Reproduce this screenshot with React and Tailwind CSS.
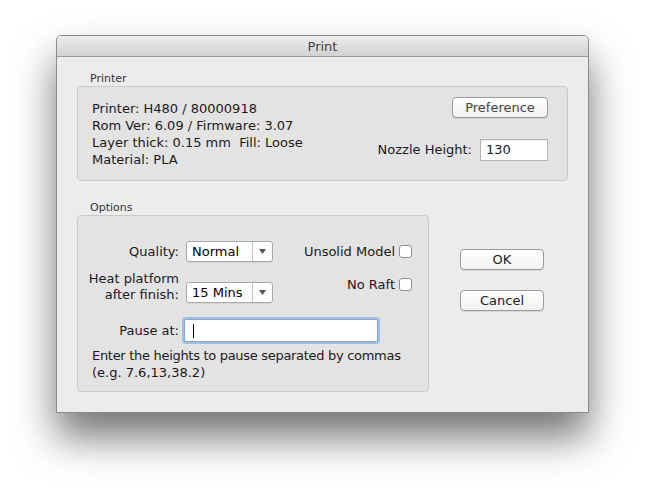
function Select({ value }) {
  return (
    <div className="flex h-[21px] w-[87px] items-stretch rounded-[3px] border border-[#a9a9a9] bg-white shadow-[0_1px_0_rgba(0,0,0,0.06)]">
      <div className="flex flex-1 items-center pl-[5px] text-[13px] text-black">{value}</div>
      <div className="flex w-[20px] items-center justify-center border-l border-[#c4c4c4]">
        <svg width="7" height="5" viewBox="0 0 7 5">
          <path d="M0 0h7L3.5 5z" fill="#555" />
        </svg>
      </div>
    </div>
  );
}

function Check() {
  return <div className="h-[13px] w-[13px] rounded-[3px] border border-[#8e8e8e] bg-white" />;
}

function Button({ children, className = "" }) {
  return (
    <div
      className={`flex h-[21px] items-center justify-center rounded-[4px] border border-[#9a9a9a] bg-gradient-to-b from-white to-[#f1f1f1] text-[13px] shadow-[0_1px_0_rgba(0,0,0,0.08)] ${className}`}
    >
      {children}
    </div>
  );
}

export default function App() {
  return (
    <div
      className="h-[491px] w-[645px] overflow-hidden bg-white pl-[56px] pt-[35px] text-[13px] text-[#1a1a1a]"
      style={{ fontFamily: '"DejaVu Sans", "Noto Sans", sans-serif' }}
    >
      <div className="h-[378px] w-[533px] overflow-hidden rounded-t-[5px] border border-[#8a8a8a] bg-[#ececec] shadow-[0_24px_40px_rgba(0,0,0,0.55)]">
        <div className="flex h-[21px] items-center justify-center border-b border-[#9b9b9b] bg-gradient-to-b from-[#ececec] to-[#d2d2d2] pt-[1px] text-[13px] text-[#404040]">
          Print
        </div>

        <div className="px-[20px]">
          <div className="mt-[15px] pl-[13px] text-[11px] leading-[14px] text-[#333]">Printer</div>
          <div className="flex h-[95px] w-[491px] justify-between rounded-[4px] border border-[#c9c9c9] bg-[#e3e3e3] pl-[14px] pr-[19px]">
            <div className="whitespace-nowrap pt-[13px] text-[13px] leading-[17px]">
              <div>Printer: H480 / 80000918</div>
              <div>Rom Ver: 6.09 / Firmware: 3.07</div>
              <div>Layer thick: 0.15 mm&nbsp;&nbsp;Fill: Loose</div>
              <div>Material: PLA</div>
            </div>
            <div className="flex flex-col items-end pt-[10px]">
              <Button className="w-[96px] text-[#444]">Preference</Button>
              <div className="mt-[21px] flex items-center gap-[8px]">
                <span>Nozzle Height:</span>
                <div className="flex h-[22px] w-[68px] items-center border border-[#b5b5b5] bg-white pl-[5px] shadow-[inset_0_1px_1px_rgba(0,0,0,0.1)]">
                  130
                </div>
              </div>
            </div>
          </div>

          <div className="flex">
            <div>
              <div className="mt-[20px] pl-[13px] text-[11px] leading-[14px] text-[#333]">Options</div>
              <div className="h-[177px] w-[352px] whitespace-nowrap rounded-[4px] border border-[#c9c9c9] bg-[#e3e3e3] pl-[14px] pr-[16px] pt-[25px]">
                <div className="flex h-[21px] items-center">
                  <div className="w-[87px] text-right">Quality:</div>
                  <div className="ml-[7px]">
                    <Select value="Normal" />
                  </div>
                  <div className="ml-auto flex items-center gap-[4px]">
                    <span>Unsolid Model</span>
                    <Check />
                  </div>
                </div>
                <div className="mt-[9px] flex items-end">
                  <div className="flex w-[87px] flex-col items-end leading-[16px]">
                    <div>Heat platform</div>
                    <div>after finish:</div>
                  </div>
                  <div className="ml-[7px]">
                    <Select value="15 Mins" />
                  </div>
                  <div className="mb-[9px] ml-auto flex items-center gap-[4px]">
                    <span>No Raft</span>
                    <Check />
                  </div>
                </div>
                <div className="mt-[16px] flex items-center">
                  <div className="w-[87px] text-right">Pause at:</div>
                  <div className="ml-[5px] flex h-[23px] w-[194px] items-center rounded-[2px] border border-[#7fa8d4] bg-white pl-[8px] shadow-[0_0_0_2px_#9cc0e6]">
                    <div className="h-[14px] w-px bg-black" />
                  </div>
                </div>
                <div className="mt-[5px] leading-[17px]">
                  <div className="tracking-[-0.3px]">Enter the heights to pause separated by commas</div>
                  <div>(e.g. 7.6,13,38.2)</div>
                </div>
              </div>
            </div>
            <div className="ml-[31px] flex flex-col pt-[68px]">
              <Button className="w-[84px]">OK</Button>
              <Button className="mt-[20px] w-[84px]">Cancel</Button>
            </div>
          </div>
        </div>
      </div>
    </div>
  );
}
